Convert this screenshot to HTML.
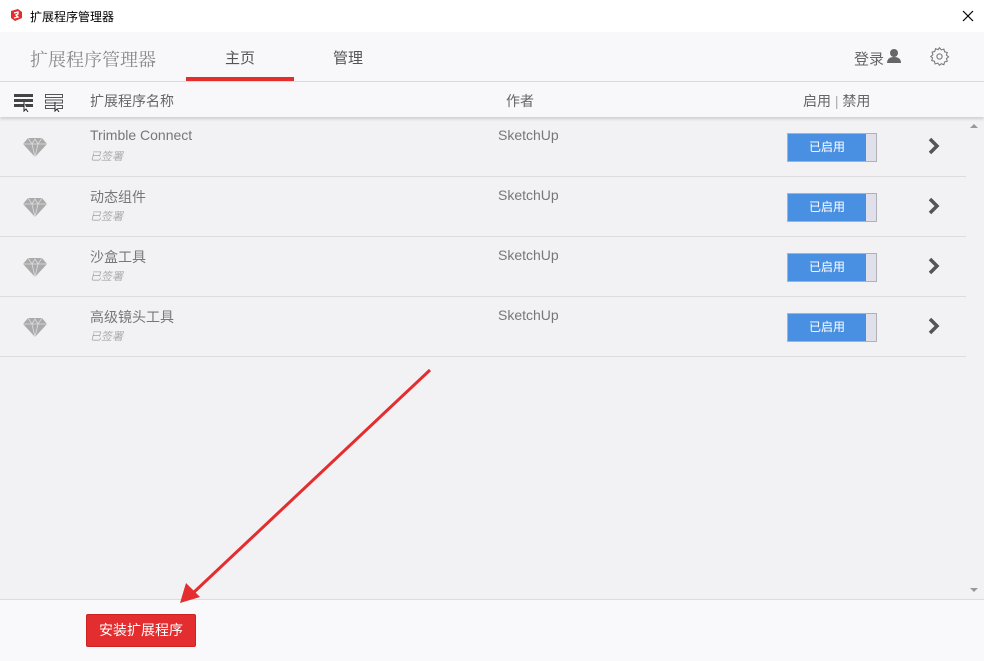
<!DOCTYPE html>
<html><head><meta charset="utf-8"><style>
*{margin:0;padding:0;box-sizing:border-box}
body{width:984px;height:661px;overflow:hidden;font-family:"Liberation Sans","Noto Sans CJK SC",sans-serif;background:#f2f2f5;position:relative;color:#666}
.abs{position:absolute}
#title{left:0;top:0;width:984px;height:32px;background:#fff}
#title span{position:absolute;left:30px;top:8px;font-size:12px;color:#000}
#hdr{left:0;top:32px;width:984px;height:50px;background:#f8f8fa;border-bottom:1px solid #dcdcdf}
#col{left:0;top:82px;width:984px;height:35px;background:#f8f8fa;box-shadow:0 2px 3px rgba(0,0,0,.15);z-index:2}
.row{position:absolute;left:0;width:966px;height:60px;border-bottom:1px solid #dcdcdf}
.row .n{position:absolute;left:90px;top:10px;font-size:14px;color:#777}
.row .s{position:absolute;left:90px;top:31px;font-size:11px;color:#aaa;font-style:italic}
.row .a{position:absolute;left:498px;top:10px;font-size:14px;color:#777}
.row .b{position:absolute;left:787px;top:16px;width:90px;height:29px;border:1px solid #b0b0b8;background:#dfe0ea}
.row .b i{position:absolute;left:0;top:0;width:78px;height:27px;background:#4a90e2;color:#fff;font-style:normal;font-size:12px;text-align:center;line-height:27px}
.row svg.g{position:absolute;left:23px;top:20px}
.row svg.ar{position:absolute;left:928px;top:20px}
#foot{left:0;top:599px;width:984px;height:62px;background:#f9f9fb;border-top:1px solid #dcdcdf}
#btn{left:86px;top:614px;width:110px;height:33px;background:#e32d2f;border:1px solid #c22;border-radius:2px;color:#fff;font-size:14px;text-align:center;line-height:31px}
</style></head><body>
<div id="title" class="abs">
<svg class="abs" style="left:9px;top:8px" width="14" height="14" viewBox="0 0 14 14"><path d="M2 3 L9 1 L13 4 L13 10 L6 13 L2 10Z" fill="#e32d2f"/><path d="M5 5 L9 4 L9 6 L7 7 L9 9 L5 10" stroke="#fff" stroke-width="1.3" fill="none"/></svg>
<span>扩展程序管理器</span>
<svg class="abs" style="left:962px;top:10px" width="12" height="12"><path d="M1 1L11 11M11 1L1 11" stroke="#000" stroke-width="1.2"/></svg>
</div>
<div id="hdr" class="abs">
<div class="abs" style="left:30px;top:14px;font-size:18px;color:#888;font-family:'Noto Serif CJK SC','Liberation Serif',serif">扩展程序管理器</div>
<div class="abs" style="left:225px;top:15px;font-size:15px;color:#555">主页</div>
<div class="abs" style="left:186px;top:45px;width:108px;height:4px;background:#e32d2f"></div>
<div class="abs" style="left:333px;top:15px;font-size:15px;color:#555">管理</div>
<div class="abs" style="left:854px;top:16px;font-size:15px;color:#666">登录</div>
<svg class="abs" style="left:886px;top:16px" width="16" height="16" viewBox="0 0 16 16"><circle cx="8" cy="5" r="4" fill="#666"/><path d="M1 15 Q1 9 8 9 Q15 9 15 15Z" fill="#666"/></svg>
<svg class="abs" style="left:929px;top:14px" width="21" height="21" viewBox="0 0 24 24"><path d="M12 2l2 2.5 3-1 .8 3.1 3.1.8-1 3 2.5 2-2.5 2 1 3-3.1.8-.8 3.1-3-1L12 22l-2-2.5-3 1-.8-3.1-3.1-.8 1-3L2 12l2.5-2-1-3 3.1-.8L7.4 3.1l3 1z" fill="none" stroke="#777" stroke-width="1.2"/><circle cx="12" cy="12" r="3" fill="none" stroke="#777" stroke-width="1.2"/></svg>
</div>
<div id="col" class="abs">
<svg class="abs" style="left:14px;top:12px" width="20" height="18"><rect x="0" y="0" width="19" height="3" fill="#444"/><rect x="0" y="5" width="19" height="3" fill="#444"/><rect x="0" y="10" width="19" height="3" fill="#444"/><path d="M10 8 L10 17 L12 15 L14 18" stroke="#222" fill="#fff"/></svg>
<svg class="abs" style="left:45px;top:12px" width="20" height="18"><rect x=".5" y=".5" width="17" height="3" fill="none" stroke="#555"/><rect x=".5" y="6" width="17" height="3" fill="none" stroke="#555"/><rect x=".5" y="11.5" width="17" height="3" fill="none" stroke="#555"/><path d="M10 8 L10 17 L12 15 L14 18" stroke="#222" fill="#fff"/></svg>
<div class="abs" style="left:90px;top:9px;font-size:14px;color:#666">扩展程序名称</div>
<div class="abs" style="left:506px;top:9px;font-size:14px;color:#666">作者</div>
<div class="abs" style="left:803px;top:9px;font-size:14px;color:#666">启用 <span style="color:#aaa">|</span> 禁用</div>
</div>
<div class="abs" style="left:966px;top:117px;width:18px;height:482px;background:#f2f2f5"></div>
<svg class="abs" style="left:970px;top:123px" width="8" height="6"><path d="M0 5L4 1L8 5Z" fill="#999"/></svg>
<svg class="abs" style="left:970px;top:587px" width="8" height="6"><path d="M0 1L4 5L8 1Z" fill="#999"/></svg>

<div class="row" style="top:117px"><svg class="g" width="24" height="20" viewBox="0 0 24 20"><path d="M5 1H19L24 7L12 20L0 7Z" fill="#aaa"/><path d="M0 7H24M5 1L9 7L12 20L15 7L19 1M9 7L12 2L15 7" stroke="#ddd" stroke-width=".8" fill="none"/></svg><div class="n">Trimble Connect</div><div class="s">已签署</div><div class="a">SketchUp</div><div class="b"><i>已启用</i></div><svg class="ar" width="12" height="18"><path d="M2 2L9 9L2 16" stroke="#555" stroke-width="3.5" fill="none"/></svg></div>
<div class="row" style="top:177px"><svg class="g" width="24" height="20" viewBox="0 0 24 20"><path d="M5 1H19L24 7L12 20L0 7Z" fill="#aaa"/><path d="M0 7H24M5 1L9 7L12 20L15 7L19 1M9 7L12 2L15 7" stroke="#ddd" stroke-width=".8" fill="none"/></svg><div class="n">动态组件</div><div class="s">已签署</div><div class="a">SketchUp</div><div class="b"><i>已启用</i></div><svg class="ar" width="12" height="18"><path d="M2 2L9 9L2 16" stroke="#555" stroke-width="3.5" fill="none"/></svg></div>
<div class="row" style="top:237px"><svg class="g" width="24" height="20" viewBox="0 0 24 20"><path d="M5 1H19L24 7L12 20L0 7Z" fill="#aaa"/><path d="M0 7H24M5 1L9 7L12 20L15 7L19 1M9 7L12 2L15 7" stroke="#ddd" stroke-width=".8" fill="none"/></svg><div class="n">沙盒工具</div><div class="s">已签署</div><div class="a">SketchUp</div><div class="b"><i>已启用</i></div><svg class="ar" width="12" height="18"><path d="M2 2L9 9L2 16" stroke="#555" stroke-width="3.5" fill="none"/></svg></div>
<div class="row" style="top:297px"><svg class="g" width="24" height="20" viewBox="0 0 24 20"><path d="M5 1H19L24 7L12 20L0 7Z" fill="#aaa"/><path d="M0 7H24M5 1L9 7L12 20L15 7L19 1M9 7L12 2L15 7" stroke="#ddd" stroke-width=".8" fill="none"/></svg><div class="n">高级镜头工具</div><div class="s">已签署</div><div class="a">SketchUp</div><div class="b"><i>已启用</i></div><svg class="ar" width="12" height="18"><path d="M2 2L9 9L2 16" stroke="#555" stroke-width="3.5" fill="none"/></svg></div>

<div id="foot" class="abs"></div>
<div id="btn" class="abs">安装扩展程序</div>
<svg class="abs" style="left:0;top:0;z-index:5" width="984" height="661"><line x1="430" y1="370" x2="192" y2="594" stroke="#e32d2f" stroke-width="3"/><path d="M180 603 L186 583 L200 597Z" fill="#e32d2f"/></svg>
</body></html>
